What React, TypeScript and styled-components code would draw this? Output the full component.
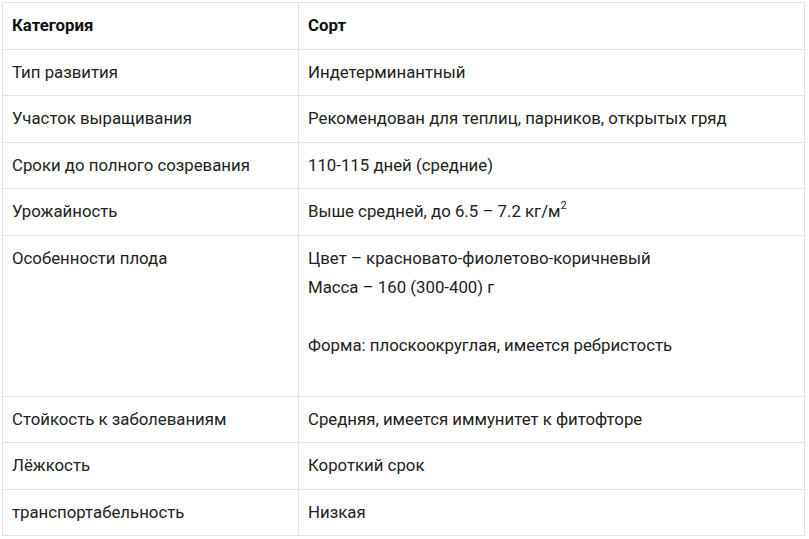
import React from "react";
import styled, { createGlobalStyle } from "styled-components";

const Global = createGlobalStyle`
  html, body { margin: 0; padding: 0; background: #ffffff; }
  body { font-family: Roboto, "Noto Sans", "Liberation Sans", sans-serif; }
`;

const Page = styled.div`
  padding: 2px;
`;

const Table = styled.table`
  width: 803px;
  border-collapse: collapse;
  table-layout: fixed;
  font-size: 16.8px;
  line-height: 29px;
  color: #222222;
`;

const Cell = styled.td<{ $head?: boolean }>`
  border: 1px solid #e0e0e6;
  padding: 8.25px 9px;
  vertical-align: top;
  text-align: left;
  white-space: nowrap;
  font-weight: ${(p) => (p.$head ? 700 : 400)};
  color: ${(p) => (p.$head ? "#111111" : "#222222")};
`;

const Para = styled.p<{ $after: number }>`
  margin: 0 0 ${(p) => p.$after}px 0;
`;

const Sup = styled.sup`
  font-size: 11px;
  line-height: 0;
  vertical-align: 8px;
`;

type Row = { k: string; v: React.ReactNode };

const rows: Row[] = [
  { k: "Тип развития", v: "Индетерминантный" },
  { k: "Участок выращивания", v: "Рекомендован для теплиц, парников, открытых гряд" },
  { k: "Сроки до полного созревания", v: "110-115 дней (средние)" },
  {
    k: "Урожайность",
    v: (
      <>
        Выше средней, до 6.5 – 7.2 кг/м<Sup>2</Sup>
      </>
    ),
  },
  {
    k: "Особенности плода",
    v: (
      <>
        <Para $after={29}>
          Цвет – красновато-фиолетово-коричневый
          <br />
          Масса – 160 (300-400) г
        </Para>
        <Para $after={27.5}>Форма: плоскоокруглая, имеется ребристость</Para>
      </>
    ),
  },
  { k: "Стойкость к заболеваниям", v: "Средняя, имеется иммунитет к фитофторе" },
  { k: "Лёжкость", v: "Короткий срок" },
  { k: "транспортабельность", v: "Низкая" },
];

export default function App() {
  return (
    <Page>
      <Global />
      <Table>
        <colgroup>
          <col style={{ width: "296px" }} />
          <col />
        </colgroup>
        <thead>
          <tr>
            <Cell as="th" $head>
              Категория
            </Cell>
            <Cell as="th" $head>
              Сорт
            </Cell>
          </tr>
        </thead>
        <tbody>
          {rows.map((r) => (
            <tr key={r.k}>
              <Cell>{r.k}</Cell>
              <Cell>{r.v}</Cell>
            </tr>
          ))}
        </tbody>
      </Table>
    </Page>
  );
}
